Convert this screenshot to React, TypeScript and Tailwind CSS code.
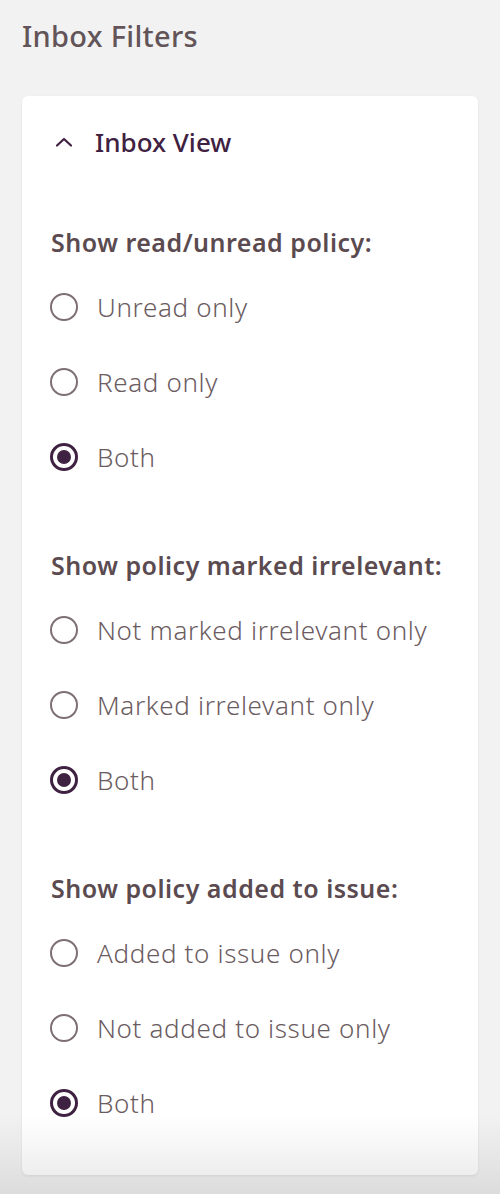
import React from "react";

const FONT = { fontFamily: '"Noto Sans", "Open Sans", sans-serif' };

type Section = { title: string; options: string[]; selected: number };

const sections: Section[] = [
  { title: "Show read/unread policy:", options: ["Unread only", "Read only", "Both"], selected: 2 },
  {
    title: "Show policy marked irrelevant:",
    options: ["Not marked irrelevant only", "Marked irrelevant only", "Both"],
    selected: 2,
  },
  {
    title: "Show policy added to issue:",
    options: ["Added to issue only", "Not added to issue only", "Both"],
    selected: 2,
  },
];

function Radio({ checked }: { checked: boolean }) {
  return checked ? (
    <span className="flex h-[28px] w-[28px] shrink-0 items-center justify-center rounded-full border-[3px] border-[#3f2141]">
      <span className="h-[14px] w-[14px] rounded-full bg-[#3f2141]" />
    </span>
  ) : (
    <span className="h-[28px] w-[28px] shrink-0 rounded-full border-[2.5px] border-[#7d6f73]" />
  );
}

export default function App() {
  return (
    <div className="relative h-[1194px] w-[500px] overflow-hidden bg-[#f2f2f2]" style={FONT}>
      <h1 className="pl-[22px] pt-[16px] text-[29px] font-medium leading-[40px] tracking-[0.3px] text-[#625458]">Inbox Filters</h1>
      <div className="mx-[22px] mt-[40px] rounded-[6px] bg-white pb-[35px] shadow-[0_1px_3px_rgba(0,0,0,0.08)]">
        <div className="flex h-[92px] items-center pl-[33px]">
          <svg width="18" height="12" viewBox="0 0 18 12" fill="none" className="shrink-0">
            <path d="M2 9.5 L9 3 L16 9.5" stroke="#3f2141" strokeWidth="2.2" strokeLinecap="round" strokeLinejoin="round" />
          </svg>
          <span className="ml-[22px] text-[26px] font-medium leading-none text-[#3f2141]">Inbox View</span>
        </div>
        <div className="mt-[28px] flex flex-col gap-[45px] px-[28px]">
          {sections.map((s) => (
            <div key={s.title} className="flex flex-col">
              <div className="flex h-[53px] items-center whitespace-nowrap pl-[1px] text-[25px] font-semibold tracking-[0.5px] text-[#5b4b50]">{s.title}</div>
              {s.options.map((o, i) => (
                <div key={o} className="flex h-[75px] items-center gap-[19px]">
                  <Radio checked={i === s.selected} />
                  <span className="whitespace-nowrap pt-[2px] text-[26px] font-light tracking-[0.65px] text-[#6b5c61]">{o}</span>
                </div>
              ))}
            </div>
          ))}
        </div>
      </div>
      <div className="pointer-events-none absolute inset-x-0 bottom-0 h-[80px] bg-gradient-to-b from-transparent to-[rgba(0,0,0,0.09)]" />
    </div>
  );
}
